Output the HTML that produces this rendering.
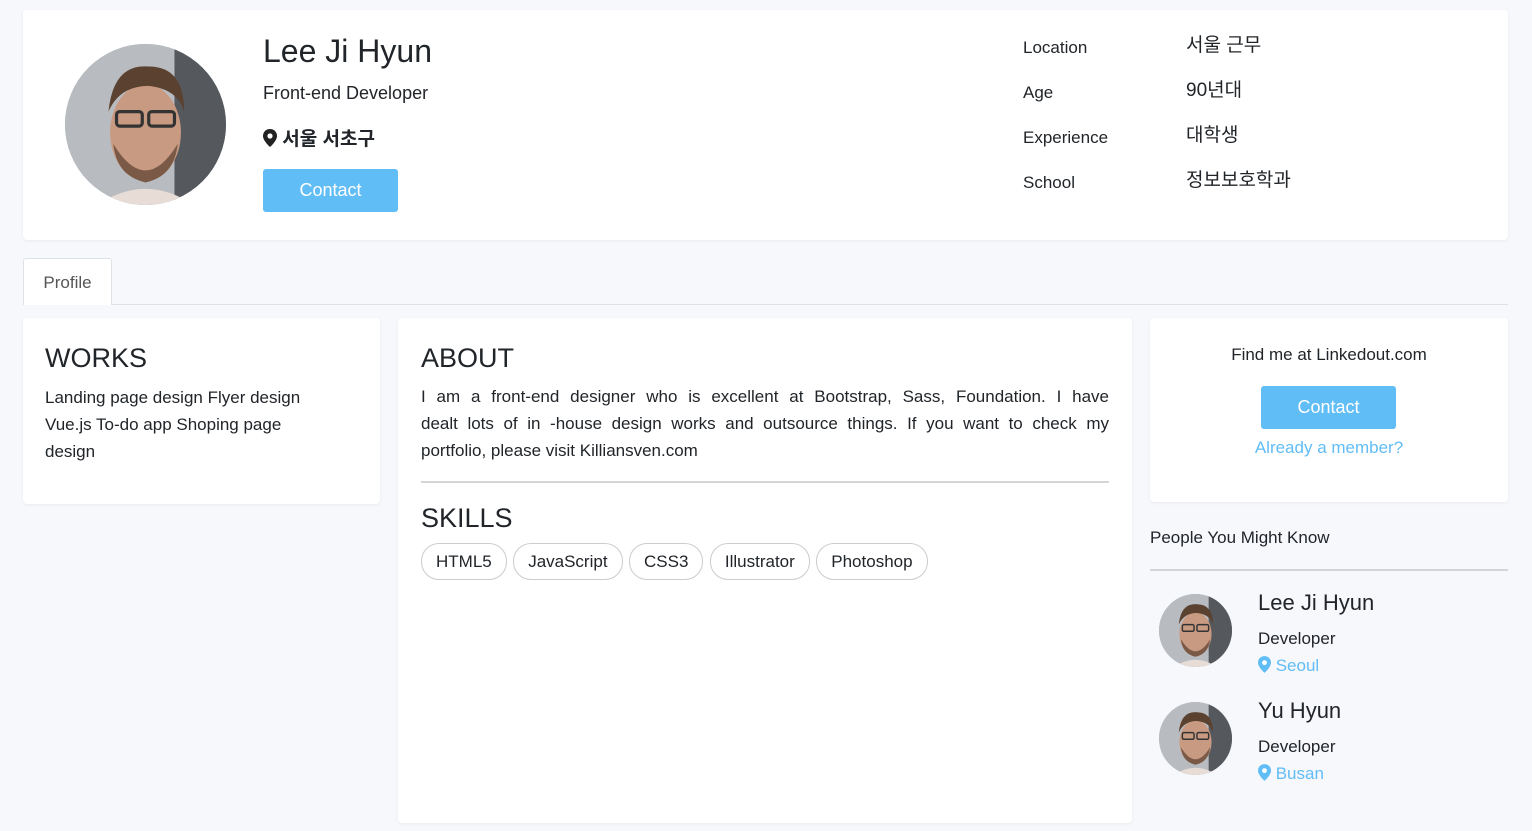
<!DOCTYPE html>
<html><head><meta charset="utf-8"><style>
*{box-sizing:border-box;margin:0;padding:0}
body{width:1532px;height:831px;background:#f7f8fc;font-family:"Liberation Sans","Noto Sans CJK KR",sans-serif;color:#212529;position:relative;overflow:hidden}
.card{position:absolute;background:#fff;border-radius:4px;box-shadow:0 1px 3px rgba(0,0,0,.06)}
.abs{position:absolute;white-space:nowrap}
.av{position:absolute;border-radius:50%;overflow:hidden;background:radial-gradient(circle at 35% 40%,#c9ccd0,#9a9ea3 60%,#3a3d42 100%)}
.btn{position:absolute;background:#61bdf6;color:#fff;border-radius:3px;text-align:center}
.pill{display:inline-block;border:1px solid #ccc;border-radius:18px;padding:0 14px;height:37px;line-height:35px;font-size:17px;margin-right:2px}
.j{text-align:justify;text-align-last:justify;width:688px;height:27px}
.kv{font-size:19px;line-height:22px}
</style></head><body>
<svg width="0" height="0" style="position:absolute"><defs>
<symbol id="face" viewBox="0 0 100 100">
<rect width="100" height="100" fill="#b8bcc1"/>
<rect x="68" width="32" height="100" fill="#55585d"/>
<ellipse cx="50" cy="55" rx="22" ry="30" fill="#c99a82"/>
<path d="M27 42 Q30 12 52 14 Q74 14 74 42 Q70 28 52 26 Q34 26 27 42Z" fill="#5a4130"/>
<path d="M30 62 Q50 95 70 62 Q68 82 50 86 Q32 82 30 62Z" fill="#7a5a46"/>
<rect x="32" y="42" width="16" height="9" rx="2" fill="none" stroke="#333" stroke-width="2"/>
<rect x="52" y="42" width="16" height="9" rx="2" fill="none" stroke="#333" stroke-width="2"/>
<path d="M20 100 Q50 80 80 100Z" fill="#e8ddd6"/>
</symbol></defs></svg>

<div class="card" style="left:23px;top:10px;width:1485px;height:230px"></div>
<svg class="av" style="left:65px;top:44px;width:161px;height:161px"><use href="#face"/></svg>
<div class="abs" style="left:263px;top:33px;font-size:32px">Lee Ji Hyun</div>
<div class="abs" style="left:263px;top:83px;font-size:18px">Front-end Developer</div>
<div class="abs" style="left:263px;top:124px;font-size:19px;font-weight:bold"><svg width="14" height="18" viewBox="0 0 14 18" style="vertical-align:-2px"><path d="M7 0C3 0 0 3 0 7c0 5 7 11 7 11s7-6 7-11c0-4-3-7-7-7z" fill="#222"/><circle cx="7" cy="7" r="2.6" fill="#fff"/></svg> 서울 서초구</div>
<div class="btn" style="left:263px;top:169px;width:135px;height:43px;line-height:43px;font-size:18px">Contact</div>
<div class="abs" style="left:1023px;top:37px;font-size:17px;line-height:22px">Location</div>
<div class="abs" style="left:1023px;top:82px;font-size:17px;line-height:22px">Age</div>
<div class="abs" style="left:1023px;top:127px;font-size:17px;line-height:22px">Experience</div>
<div class="abs" style="left:1023px;top:172px;font-size:17px;line-height:22px">School</div>
<div class="abs kv" style="left:1186px;top:35px">서울 근무</div>
<div class="abs kv" style="left:1186px;top:80px">90년대</div>
<div class="abs kv" style="left:1186px;top:125px">대학생</div>
<div class="abs kv" style="left:1186px;top:170px">정보보호학과</div>

<div class="abs" style="left:23px;top:258px;width:89px;height:47px;background:#fff;border:1px solid #dee2e6;border-bottom:none;border-radius:3px 3px 0 0;font-size:17px;color:#555;text-align:center;line-height:48px">Profile</div>
<div class="abs" style="left:111px;top:304px;width:1397px;height:1px;background:#dee2e6"></div>

<div class="card" style="left:23px;top:318px;width:357px;height:186px"></div>
<div class="abs" style="left:45px;top:343px;font-size:27px">WORKS</div>
<div class="abs" style="left:45px;top:384px;font-size:17px;line-height:27px">Landing page design Flyer design<br>Vue.js To-do app Shoping page<br>design</div>

<div class="card" style="left:398px;top:318px;width:734px;height:505px"></div>
<div class="abs" style="left:421px;top:343px;font-size:27px">ABOUT</div>
<div class="abs" style="left:421px;top:383px;font-size:17px;line-height:27px;white-space:normal">
<div class="j">I am a front-end designer who is excellent at Bootstrap, Sass, Foundation. I have</div>
<div class="j">dealt lots of in -house design works and outsource things. If you want to check my</div>
<div>portfolio, please visit Killiansven.com</div></div>
<div class="abs" style="left:421px;top:481px;width:688px;height:2px;background:#d5d5d5"></div>
<div class="abs" style="left:421px;top:503px;font-size:27px">SKILLS</div>
<div class="abs" style="left:421px;top:543px"><span class="pill">HTML5</span> <span class="pill">JavaScript</span> <span class="pill">CSS3</span> <span class="pill">Illustrator</span> <span class="pill">Photoshop</span></div>

<div class="card" style="left:1150px;top:318px;width:358px;height:184px"></div>
<div class="abs" style="left:1150px;width:358px;top:345px;font-size:17px;text-align:center">Find me at Linkedout.com</div>
<div class="btn" style="left:1261px;top:386px;width:135px;height:43px;line-height:43px;font-size:18px">Contact</div>
<div class="abs" style="left:1150px;width:358px;top:438px;font-size:17px;text-align:center;color:#61bdf6">Already a member?</div>

<div class="abs" style="left:1150px;top:528px;font-size:17px">People You Might Know</div>
<div class="abs" style="left:1150px;top:569px;width:358px;height:2px;background:#d5d5d5"></div>

<svg class="av" style="left:1159px;top:594px;width:73px;height:73px"><use href="#face"/></svg>
<div class="abs" style="left:1258px;top:590px;font-size:22px">Lee Ji Hyun</div>
<div class="abs" style="left:1258px;top:629px;font-size:17px">Developer</div>
<div class="abs" style="left:1258px;top:656px;font-size:17px;color:#61bdf6"><svg width="13" height="17" viewBox="0 0 14 18" style="vertical-align:-2px"><path d="M7 0C3 0 0 3 0 7c0 5 7 11 7 11s7-6 7-11c0-4-3-7-7-7z" fill="#61bdf6"/><circle cx="7" cy="7" r="2.6" fill="#fff"/></svg> Seoul</div>

<svg class="av" style="left:1159px;top:702px;width:73px;height:73px"><use href="#face"/></svg>
<div class="abs" style="left:1258px;top:698px;font-size:22px">Yu Hyun</div>
<div class="abs" style="left:1258px;top:737px;font-size:17px">Developer</div>
<div class="abs" style="left:1258px;top:764px;font-size:17px;color:#61bdf6"><svg width="13" height="17" viewBox="0 0 14 18" style="vertical-align:-2px"><path d="M7 0C3 0 0 3 0 7c0 5 7 11 7 11s7-6 7-11c0-4-3-7-7-7z" fill="#61bdf6"/><circle cx="7" cy="7" r="2.6" fill="#fff"/></svg> Busan</div>
</body></html>
